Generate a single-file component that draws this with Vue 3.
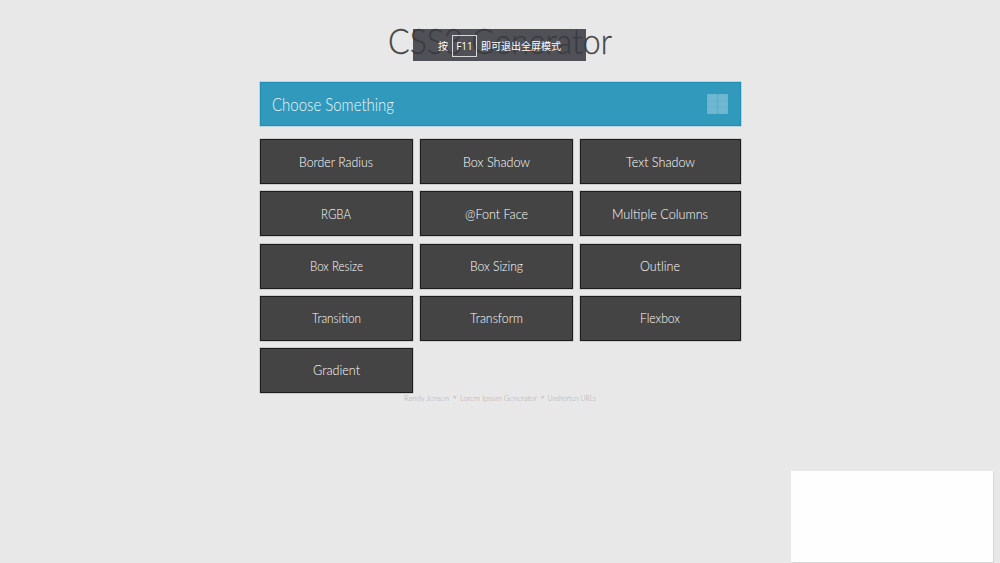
<script setup>
const generators = [
  { label: 'Border Radius', width: 74 },
  { label: 'Box Shadow', width: 67 },
  { label: 'Text Shadow', width: 69 },
  { label: 'RGBA', width: 30 },
  { label: '@Font Face', width: 63 },
  { label: 'Multiple Columns', width: 96 },
  { label: 'Box Resize', width: 53 },
  { label: 'Box Sizing', width: 53 },
  { label: 'Outline', width: 40 },
  { label: 'Transition', width: 49 },
  { label: 'Transform', width: 53 },
  { label: 'Flexbox', width: 40 },
  { label: 'Gradient', width: 47 },
]
</script>

<template>
  <div class="page">
    <h1 class="title">
      <svg width="226" height="46">
        <text x="1" y="31.5" textLength="224" lengthAdjust="spacingAndGlyphs">CSS3 Generator</text>
      </svg>
    </h1>
    <main class="content">
      <header class="chooser">
        <svg class="heading" width="130" height="30">
          <text x="0" y="21.5" textLength="122" lengthAdjust="spacingAndGlyphs">Choose Something</text>
        </svg>
        <span class="grid-icon"><i v-for="n in 6" :key="n"></i></span>
      </header>
      <nav class="tiles">
        <a v-for="item in generators" :key="item.label" class="tile">
          <svg :width="item.width" height="24">
            <text x="0" y="16.5" :textLength="item.width" lengthAdjust="spacingAndGlyphs">{{ item.label }}</text>
          </svg>
        </a>
      </nav>
    </main>
    <footer class="footer">
      <svg width="192" height="12">
        <text x="0" y="8" textLength="45" lengthAdjust="spacingAndGlyphs">Randy Jensen</text>
        <text class="star" x="48.5" y="11">*</text>
        <text x="56" y="8" textLength="77" lengthAdjust="spacingAndGlyphs">Lorem Ipsum Generator</text>
        <text class="star" x="136.3" y="11">*</text>
        <text x="143.5" y="8" textLength="48.5" lengthAdjust="spacingAndGlyphs">Unshorten URLs</text>
      </svg>
    </footer>
    <div class="fullscreen-hint"><span>按</span><kbd>F11</kbd><span>即可退出全屏模式</span></div>
    <div class="popup"></div>
  </div>
</template>

<style>
body { background: #e8e8e8; }
</style>

<style scoped>
.page {
  position: relative;
  height: 563px;
  overflow: hidden;
  background: #e8e8e8;
  font-family: Lato, "Open Sans", sans-serif;
  font-weight: 300;
}
svg { display: block; overflow: visible; }
.title {
  height: 60px;
  margin: 0;
  padding-top: 22px;
  display: flex;
  justify-content: center;
  font-size: 36px;
  font-weight: 300;
}
.title text { fill: #444; stroke: #444; stroke-width: 0.3px; }
.content {
  width: 481px;
  margin-left: 260px;
}
.chooser {
  box-sizing: border-box;
  height: 44px;
  padding: 0 12px 0 11px;
  display: flex;
  align-items: center;
  justify-content: space-between;
  background: #3199bc;
  border: 1px solid #218fb5;
  box-shadow: 0 0 0 0.5px #8cc0d2;
}
.heading { font-size: 17.5px; }
.heading text { fill: #edf8fb; }
.grid-icon {
  display: grid;
  grid-template-columns: 10px 10px;
  grid-template-rows: repeat(3, 6.67px);
  background: #5cadca;
  column-gap: 0.7px;
}
.grid-icon i { background: #70b8d1; box-shadow: inset 0 0 0 0.5px #63b0cc; }
.tiles {
  margin-top: 13.3px;
  display: grid;
  grid-template-columns: 153px 153px 161px;
  grid-auto-rows: 45px;
  column-gap: 7px;
  row-gap: 7.15px;
}
.tile {
  box-sizing: border-box;
  display: flex;
  align-items: center;
  justify-content: center;
  background: #444;
  border: 1px solid #1c1c1c;
  box-shadow: 0 0 0 0.5px rgba(0, 0, 0, 0.25);
  font-size: 13.5px;
}
.tile svg { margin-left: -1px; }
.tile text { fill: #fff; }
.footer {
  display: flex;
  justify-content: center;
  font-size: 7.5px;
}
.footer text { fill: #a8a8a8; }
.footer .star { font-size: 11px; }
.fullscreen-hint {
  position: absolute;
  left: 413px;
  top: 29px;
  width: 173px;
  height: 32px;
  display: flex;
  align-items: center;
  justify-content: center;
  gap: 4px;
  padding-top: 1px;
  box-sizing: border-box;
  background: rgba(56, 59, 65, 0.87);
  color: #fff;
  font: 400 10px/1 "Noto Sans CJK SC", sans-serif;
}
.fullscreen-hint kbd {
  box-sizing: border-box;
  width: 25px;
  height: 22px;
  border: 1px solid #d5d7d9;
  font: 400 10px/20px "Open Sans", sans-serif;
  text-align: center;
}
.popup {
  position: absolute;
  left: 791px;
  top: 471px;
  width: 202px;
  height: 91px;
  background: #fefefe;
  box-shadow: 0 0 1px 0.5px #d7d7d7;
}
</style>
